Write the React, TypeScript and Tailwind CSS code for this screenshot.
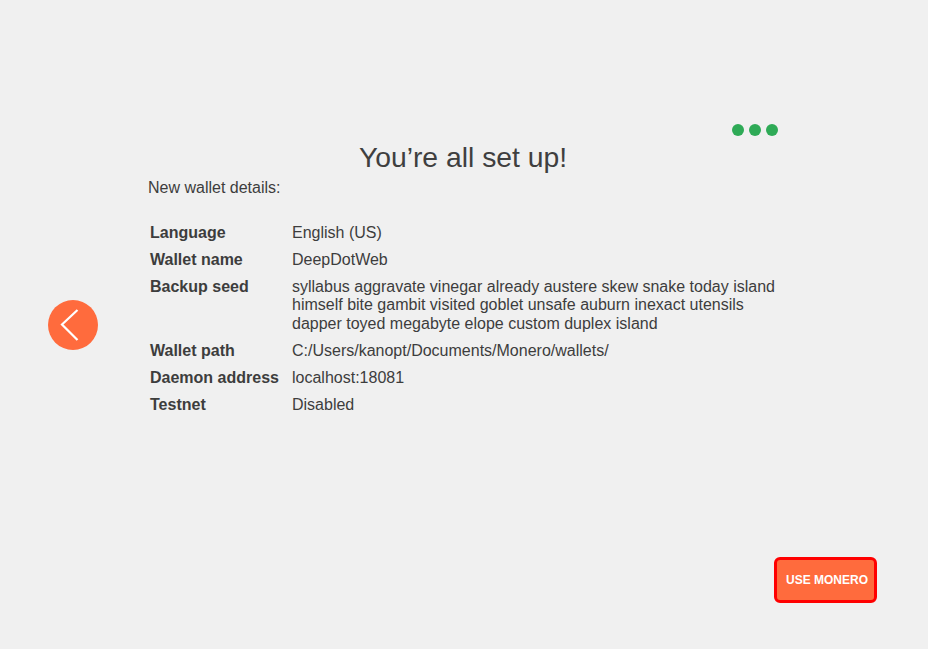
import React from 'react';

const details: { label: string; value: string }[] = [
  { label: 'Language', value: 'English (US)' },
  { label: 'Wallet name', value: 'DeepDotWeb' },
  {
    label: 'Backup seed',
    value:
      'syllabus aggravate vinegar already austere skew snake today island himself bite gambit visited goblet unsafe auburn inexact utensils dapper toyed megabyte elope custom duplex island',
  },
  { label: 'Wallet path', value: 'C:/Users/kanopt/Documents/Monero/wallets/' },
  { label: 'Daemon address', value: 'localhost:18081' },
  { label: 'Testnet', value: 'Disabled' },
];

export default function App() {
  return (
    <div
      className="grid h-[649px] w-full grid-cols-[148px_630px_1fr] grid-rows-[1fr_auto] bg-[#f0f0f0] text-[#3d3d3d]"
      style={{ fontFamily: '"Liberation Sans", Arial, sans-serif' }}
    >
      {/* back arrow */}
      <div className="row-span-2 flex items-center justify-center pr-[2px]">
        <button className="flex h-[50px] w-[50px] items-center justify-center rounded-full bg-[#ff6b3d]">
          <svg width="50" height="50" viewBox="0 0 50 50" fill="none">
            <polyline points="29.5,10 14,24.5 29.5,40" stroke="#ffffff" strokeWidth="2.2" />
          </svg>
        </button>
      </div>

      {/* main content */}
      <div className="flex flex-col pt-[124px]">
        <div className="flex justify-end gap-[5px]">
          <span className="h-[12px] w-[12px] rounded-full bg-[#2eaa56]" />
          <span className="h-[12px] w-[12px] rounded-full bg-[#2eaa56]" />
          <span className="h-[12px] w-[12px] rounded-full bg-[#2eaa56]" />
        </div>

        <h1 className="mt-[7px] text-center text-[28.3px] leading-none text-[#3f3f3f]">You’re all set up!</h1>

        <p className="mt-[7.5px] text-[16px] leading-[18.4px]">New wallet details:</p>

        <div className="mt-[26.5px] flex flex-col gap-[8.5px] pl-[2px] text-[16px] leading-[18.5px]">
          {details.map((row) => (
            <div key={row.label} className="flex">
              <div className="w-[142px] shrink-0 font-bold">{row.label}</div>
              <div className="w-[488px]">{row.value}</div>
            </div>
          ))}
        </div>
      </div>

      {/* footer */}
      <div className="col-span-2 col-start-2 row-start-2 flex justify-end pb-[46px] pr-[51px]">
        <button className="flex h-[46px] w-[103px] items-center justify-center rounded-[6px] border-[3px] border-[#ff0000] bg-[#ff6b3d] pl-[3px] text-[12px] font-bold text-white">
          USE MONERO
        </button>
      </div>
    </div>
  );
}
